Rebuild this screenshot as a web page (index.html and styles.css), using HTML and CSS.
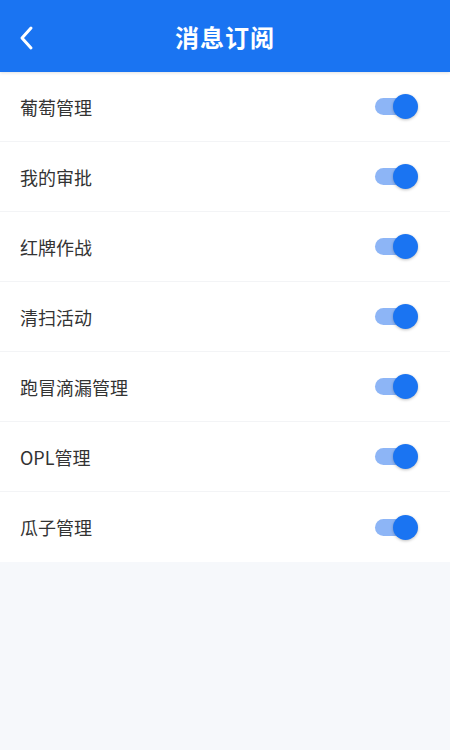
FILE: index.html
```html
<!DOCTYPE html>
<html lang="zh">
<head>
<meta charset="utf-8">
<link rel="stylesheet" href="styles.css">
</head>
<body>
<div class="app">
  <header class="nav">
    <svg class="back" width="16" height="26" viewBox="0 0 16 26"><path d="M13 3 L4 13 L13 23" fill="none" stroke="#fff" stroke-width="3" stroke-linecap="round" stroke-linejoin="round"/></svg>
    <h1 class="title">消息订阅</h1>
  </header>
  <ul class="list">
    <li class="row"><span class="label">葡萄管理</span><span class="switch"><span class="knob"></span></span></li>
    <li class="row"><span class="label">我的审批</span><span class="switch"><span class="knob"></span></span></li>
    <li class="row"><span class="label">红牌作战</span><span class="switch"><span class="knob"></span></span></li>
    <li class="row"><span class="label">清扫活动</span><span class="switch"><span class="knob"></span></span></li>
    <li class="row"><span class="label">跑冒滴漏管理</span><span class="switch"><span class="knob"></span></span></li>
    <li class="row"><span class="label">OPL管理</span><span class="switch"><span class="knob"></span></span></li>
    <li class="row"><span class="label">瓜子管理</span><span class="switch"><span class="knob"></span></span></li>
  </ul>
</div>
</body>
</html>
```
FILE: styles.css
```css
* { box-sizing: border-box; }
html, body { margin: 0; padding: 0; }
body {
  background: #f6f8fb;
  font-family: "Noto Sans CJK SC", "Noto Sans", sans-serif;
  width: 450px;
  height: 750px;
  overflow: hidden;
}
.nav {
  height: 72px;
  background: #1a74f2;
  display: flex;
  align-items: center;
  justify-content: center;
  position: relative;
  box-shadow: 0 1px 3px rgba(0,0,0,0.12);
  z-index: 1;
}
.back {
  position: absolute;
  left: 18px;
  top: 25px;
}
.title {
  margin: 0;
  color: #fff;
  font-size: 24px;
  font-weight: 700;
  letter-spacing: 1px;
}
.list {
  list-style: none;
  margin: 0;
  padding: 0;
  background: #fff;
}
.row {
  height: 70px;
  display: flex;
  align-items: center;
  justify-content: space-between;
  padding: 0 35px 0 20px;
  border-bottom: 1px solid #f3f4f6;
}
.row:last-child { border-bottom: none; }
.label {
  font-size: 18px;
  color: #333;
}
.switch {
  width: 40px;
  height: 17px;
  border-radius: 9px;
  background: #8db5f6;
  position: relative;
}
.knob {
  position: absolute;
  right: -3px;
  top: -4px;
  width: 25px;
  height: 25px;
  border-radius: 50%;
  background: #1a74f2;
  box-shadow: 0 1px 3px rgba(0,0,0,0.25);
}
```
